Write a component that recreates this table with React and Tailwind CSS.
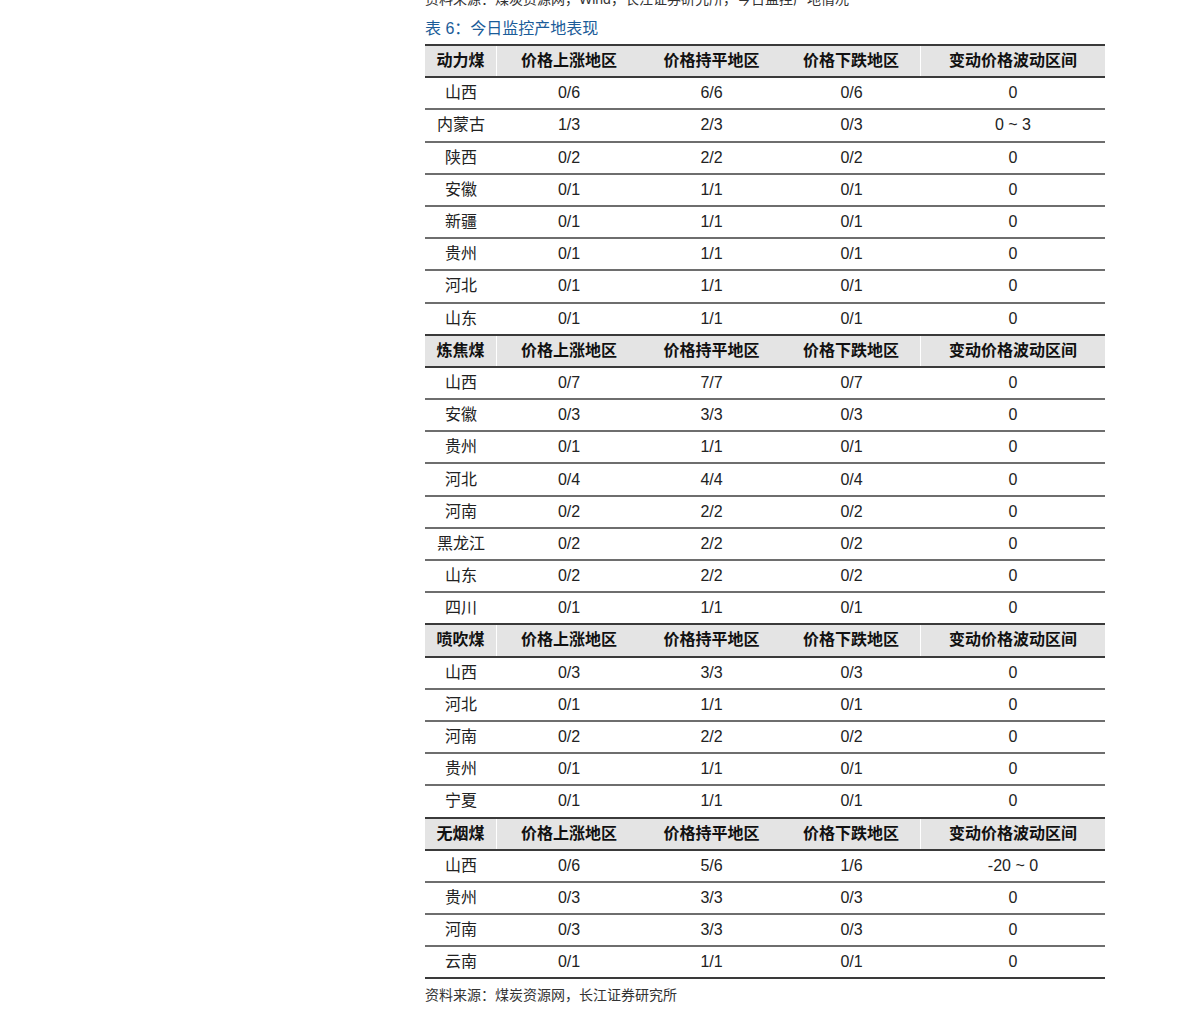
import React from 'react';

const sections = [
    {
        name: '动力煤',
        rows: [
            ['山西', '0/6', '6/6', '0/6', '0'],
            ['内蒙古', '1/3', '2/3', '0/3', '0 ~ 3'],
            ['陕西', '0/2', '2/2', '0/2', '0'],
            ['安徽', '0/1', '1/1', '0/1', '0'],
            ['新疆', '0/1', '1/1', '0/1', '0'],
            ['贵州', '0/1', '1/1', '0/1', '0'],
            ['河北', '0/1', '1/1', '0/1', '0'],
            ['山东', '0/1', '1/1', '0/1', '0'],
        ],
    },
    {
        name: '炼焦煤',
        rows: [
            ['山西', '0/7', '7/7', '0/7', '0'],
            ['安徽', '0/3', '3/3', '0/3', '0'],
            ['贵州', '0/1', '1/1', '0/1', '0'],
            ['河北', '0/4', '4/4', '0/4', '0'],
            ['河南', '0/2', '2/2', '0/2', '0'],
            ['黑龙江', '0/2', '2/2', '0/2', '0'],
            ['山东', '0/2', '2/2', '0/2', '0'],
            ['四川', '0/1', '1/1', '0/1', '0'],
        ],
    },
    {
        name: '喷吹煤',
        rows: [
            ['山西', '0/3', '3/3', '0/3', '0'],
            ['河北', '0/1', '1/1', '0/1', '0'],
            ['河南', '0/2', '2/2', '0/2', '0'],
            ['贵州', '0/1', '1/1', '0/1', '0'],
            ['宁夏', '0/1', '1/1', '0/1', '0'],
        ],
    },
    {
        name: '无烟煤',
        rows: [
            ['山西', '0/6', '5/6', '1/6', '-20 ~ 0'],
            ['贵州', '0/3', '3/3', '0/3', '0'],
            ['河南', '0/3', '3/3', '0/3', '0'],
            ['云南', '0/1', '1/1', '0/1', '0'],
        ],
    },
];

const headers = ['价格上涨地区', '价格持平地区', '价格下跌地区', '变动价格波动区间'];

const cols = 'grid grid-cols-[72px_144px_141px_139px_184px]';

function HeaderRow({ name }) {
    return (
        <div className={`${cols} h-[32.2px] bg-[#e4e4e4] border-b-2 border-[#3a3a3a] font-semibold text-[#111]`}>
            <div className="flex items-center justify-center border-r border-white">{name}</div>
            {headers.map((h, i) => (
                <div key={h} className={`flex items-center justify-center ${i === 2 ? 'border-r border-white' : ''}`}>
                    {h}
                </div>
            ))}
        </div>
    );
}

function DataRow({ cells, dark }) {
    return (
        <div className={`${cols} h-[32.2px] border-b-2 ${dark ? 'border-[#3a3a3a]' : 'border-[#6e6e6e]'} text-[#222]`}>
            {cells.map((c, i) => (
                <div key={i} className="flex items-center justify-center">{c}</div>
            ))}
        </div>
    );
}

export default function App() {
    return (
        <div className="min-h-screen bg-white pl-[425px] overflow-hidden" style={{ fontFamily: '"Liberation Sans", "Noto Sans CJK SC", sans-serif' }}>
            <div className="w-[680px]">
                <div className="-mt-[9px] text-[14px] leading-[16px] text-[#333]">
                    资料来源：煤炭资源网，Wind，长江证券研究所，今日监控产地情况
                </div>
                <div className="mt-[12px] text-[16px] leading-[20px] text-[#1b5c99]">表 6：今日监控产地表现</div>

                <div className="mt-[5px] border-t-2 border-[#3a3a3a] text-[16px]">
                    {sections.map((s) => (
                        <div key={s.name}>
                            <HeaderRow name={s.name} />
                            {s.rows.map((r, ri) => (
                                <DataRow key={ri} cells={r} dark={ri === s.rows.length - 1} />
                            ))}
                        </div>
                    ))}
                </div>

                <div className="mt-[7px] text-[14px] leading-[18px] text-[#333]">资料来源：煤炭资源网，长江证券研究所</div>
            </div>
        </div>
    );
}
